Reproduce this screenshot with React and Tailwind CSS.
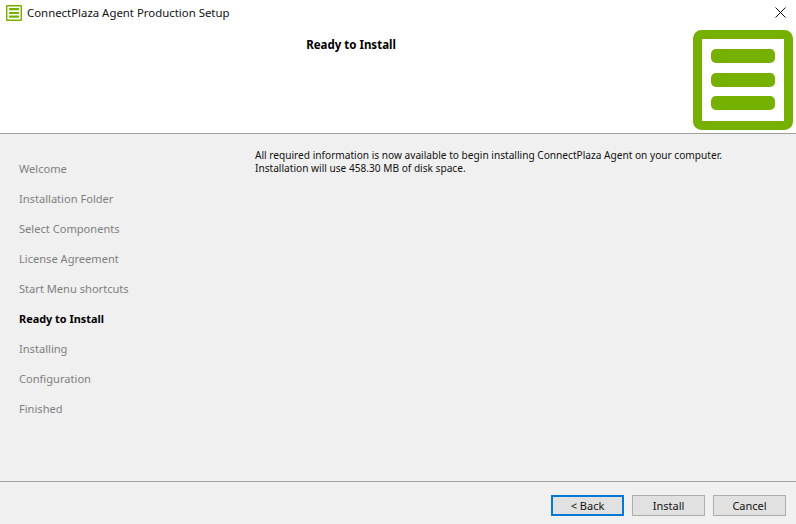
const steps = [
  "Welcome",
  "Installation Folder",
  "Select Components",
  "License Agreement",
  "Start Menu shortcuts",
  "Ready to Install",
  "Installing",
  "Configuration",
  "Finished",
];

function Logo({ className }) {
  return (
    <svg className={className} viewBox="0 0 100 100">
      <rect x="4.5" y="4.5" width="91" height="91" rx="4" fill="#fff" stroke="#76b000" strokeWidth="9" />
      <rect x="18" y="19" width="64" height="14" rx="5" fill="#76b000" />
      <rect x="18" y="43" width="64" height="14" rx="5" fill="#76b000" />
      <rect x="18" y="66" width="64" height="14" rx="5" fill="#76b000" />
    </svg>
  );
}

function WizardButton({ children, focused }) {
  return (
    <button
      className={`h-[21px] w-[73px] bg-[#e1e1e1] text-[11px] leading-none text-[#111] ${
        focused ? "border-2 border-[#0078d7]" : "border border-[#adadad]"
      }`}
    >
      {children}
    </button>
  );
}

export default function App() {
  return (
    <div
      className="flex h-[524px] w-[796px] flex-col overflow-hidden bg-[#f0f0f0] text-black"
      style={{ fontFamily: '"Noto Sans", "Open Sans", sans-serif' }}
    >
      {/* Header */}
      <header className="h-[134px] border-b border-[#a0a0a0] bg-white">
        <div className="flex h-[25px] items-center pl-[6px] pr-[10px]">
          <Logo className="h-[16px] w-[16px]" />
          <span className="ml-[5px] text-[11.4px] text-[#111]">ConnectPlaza Agent Production Setup</span>
          <svg className="ml-auto h-[11px] w-[11px]" viewBox="0 0 11 11">
            <path d="M0.5 0.5L10.5 10.5M10.5 0.5L0.5 10.5" stroke="#111" strokeWidth="1" fill="none" />
          </svg>
        </div>
        <div className="flex pr-[3px]">
          <div className="flex-1 pt-[10px] pl-[9px] text-center text-[11.5px] leading-[20px] font-bold">Ready to Install</div>
          <Logo className="mt-[5px] h-[100px] w-[100px]" />
        </div>
      </header>

      {/* Body */}
      <main className="flex flex-1">
        <nav className="flex w-[255px] flex-col pt-[20px] pl-[19px] text-[11.1px]">
          {steps.map((s) => (
            <div
              key={s}
              className={`h-[30px] leading-[30px] ${
                s === "Ready to Install" ? "text-[10.9px] font-bold text-black" : "text-[#7f7f7f]"
              }`}
            >
              {s}
            </div>
          ))}
        </nav>
        <div className="flex-1 pt-[15px] text-[10.13px] leading-[13px] text-[#111]">
          <p>All required information is now available to begin installing ConnectPlaza Agent on your computer.</p>
          <p>Installation will use 458.30 MB of disk space.</p>
        </div>
      </main>

      {/* Footer */}
      <footer className="flex h-[43px] justify-end gap-[8px] border-t border-[#a0a0a0] pt-[13px] pr-[10px]">
        <WizardButton focused>&lt; Back</WizardButton>
        <WizardButton>Install</WizardButton>
        <WizardButton>Cancel</WizardButton>
      </footer>
    </div>
  );
}
